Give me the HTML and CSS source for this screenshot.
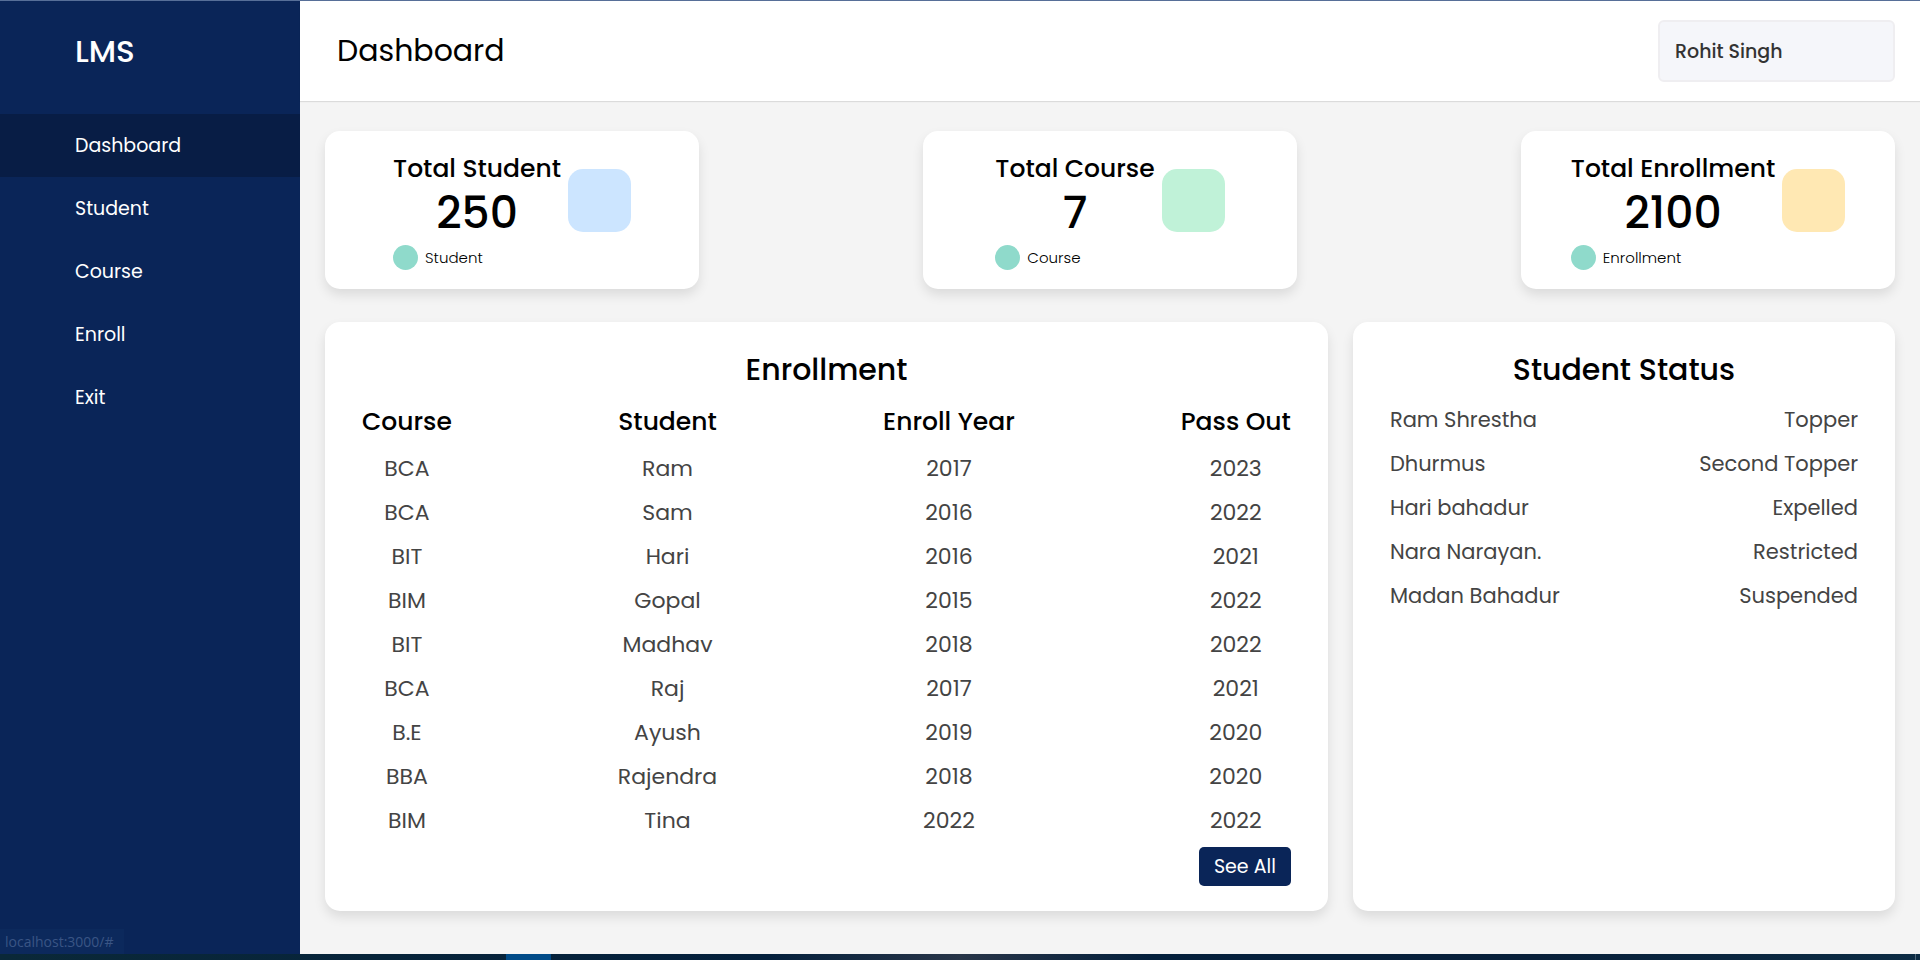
FILE: index.html
```html
<!DOCTYPE html>
<html lang="en">
<head>
<meta charset="utf-8">
<meta name="viewport" content="width=device-width, initial-scale=1">
<title>LMS Dashboard</title>
<link rel="stylesheet" href="styles.css">
</head>
<body>
<div class="shell">
  <aside class="sidebar">
    <div class="brand">LMS</div>
    <nav class="menu">
      <a class="menu-link active" href="#">Dashboard</a>
      <a class="menu-link" href="#">Student</a>
      <a class="menu-link" href="#">Course</a>
      <a class="menu-link" href="#">Enroll</a>
      <a class="menu-link" href="#">Exit</a>
    </nav>
    <div class="link-status">localhost:3000/#</div>
  </aside>
  <main class="main">
    <header class="topbar">
      <h1 class="page-title">Dashboard</h1>
      <button class="profile" type="button">Rohit Singh</button>
    </header>
    <div class="content">
      <section class="cards">
        <article class="card">
          <div class="card-text">
            <h2 class="card-title">Total Student</h2>
            <div class="card-number">250</div>
            <div class="card-note"><span class="dot"></span>Student</div>
          </div>
          <span class="tile tile-blue"></span>
        </article>
        <article class="card">
          <div class="card-text">
            <h2 class="card-title">Total Course</h2>
            <div class="card-number">7</div>
            <div class="card-note"><span class="dot"></span>Course</div>
          </div>
          <span class="tile tile-green"></span>
        </article>
        <article class="card">
          <div class="card-text">
            <h2 class="card-title">Total Enrollment</h2>
            <div class="card-number">2100</div>
            <div class="card-note"><span class="dot"></span>Enrollment</div>
          </div>
          <span class="tile tile-yellow"></span>
        </article>
      </section>
      <div class="panels">
        <section class="panel">
          <h2 class="panel-title">Enrollment</h2>
          <table class="enrollments">
            <thead>
              <tr><th>Course</th><th>Student</th><th>Enroll Year</th><th>Pass Out</th></tr>
            </thead>
            <tbody>
              <tr><td>BCA</td><td>Ram</td><td>2017</td><td>2023</td></tr>
              <tr><td>BCA</td><td>Sam</td><td>2016</td><td>2022</td></tr>
              <tr><td>BIT</td><td>Hari</td><td>2016</td><td>2021</td></tr>
              <tr><td>BIM</td><td>Gopal</td><td>2015</td><td>2022</td></tr>
              <tr><td>BIT</td><td>Madhav</td><td>2018</td><td>2022</td></tr>
              <tr><td>BCA</td><td>Raj</td><td>2017</td><td>2021</td></tr>
              <tr><td>B.E</td><td>Ayush</td><td>2019</td><td>2020</td></tr>
              <tr><td>BBA</td><td>Rajendra</td><td>2018</td><td>2020</td></tr>
              <tr><td>BIM</td><td>Tina</td><td>2022</td><td>2022</td></tr>
            </tbody>
          </table>
          <a class="see-all" href="#">See All</a>
        </section>
        <section class="panel">
          <h2 class="panel-title">Student Status</h2>
          <table class="statuses">
            <tbody>
              <tr><td>Ram Shrestha</td><td>Topper</td></tr>
              <tr><td>Dhurmus</td><td>Second Topper</td></tr>
              <tr><td>Hari bahadur</td><td>Expelled</td></tr>
              <tr><td>Nara Narayan.</td><td>Restricted</td></tr>
              <tr><td>Madan Bahadur</td><td>Suspended</td></tr>
            </tbody>
          </table>
        </section>
      </div>
    </div>
  </main>
</div>
<footer class="taskbar"><span class="taskbar-active"></span><span class="taskbar-edge"></span></footer>
</body>
</html>
```

FILE: styles.css
```css
* { box-sizing: border-box; margin: 0; padding: 0; }

body {
  display: flex;
  flex-direction: column;
  min-height: 100vh;
  border-top: 1px solid #576f98;
  background: #f4f4f4;
  color: #000;
  font-family: Poppins, Inter, "Open Sans", sans-serif;
  font-size: 21px;
}

.shell { display: flex; flex: 1; }

.sidebar {
  display: flex;
  flex-direction: column;
  flex: 0 0 300px;
  background: #0a2558;
  color: #fff;
}
.brand { padding: 0 75px; font-size: 31px; font-weight: 500; line-height: 100px; margin-bottom: 13px; }
.menu { display: flex; flex-direction: column; }
.menu-link {
  padding: 0 75px;
  color: #fff;
  font-size: 19px;
  line-height: 63px;
  text-decoration: none;
}
.menu-link.active { background: #081d45; }
.link-status {
  align-self: flex-start;
  margin-top: auto;
  padding: 0 10px 0 5px;
  background: #0c295c;
  color: #3a5585;
  font-family: "Open Sans", sans-serif;
  font-size: 14px;
  line-height: 25px;
}

.main { flex: 1; min-width: 0; }
.topbar {
  display: flex;
  align-items: center;
  justify-content: space-between;
  min-height: 100px;
  padding: 0 25px 0 37px;
  background: #fff;
  box-shadow: 0 1px 1px rgba(0, 0, 0, 0.1);
}
.page-title { font-size: 30px; font-weight: 400; }
.profile {
  width: 237px;
  height: 62px;
  padding: 0 15px;
  border: 2px solid #efeef1;
  border-radius: 6px;
  background: #f5f6fa;
  color: #333;
  font-family: inherit;
  font-size: 19px;
  font-weight: 500;
  text-align: left;
}

.content { padding: 30px 25px 43px; }
.cards { display: flex; justify-content: space-between; gap: 25px; margin-bottom: 33px; }
.card {
  display: flex;
  flex: 0 1 374px;
  justify-content: center;
  gap: 7px;
  padding: 19px 0;
}
.card, .panel {
  border-radius: 15px;
  background: #fff;
  box-shadow: 0 6px 12px rgba(0, 0, 0, 0.1);
}
.card-title { font-size: 25px; font-weight: 500; line-height: 38px; white-space: nowrap; }
.card-number { font-size: 44px; font-weight: 500; line-height: 50px; text-align: center; margin-bottom: 7px; }
.card-note { display: flex; align-items: center; gap: 7px; font-size: 15px; font-weight: 300; line-height: 25px; }
.dot { width: 25px; height: 25px; border-radius: 50%; background: #8fdacb; }
.tile { width: 63px; height: 63px; margin-top: 19px; border-radius: 15px; }
.tile-blue { background: #cce5ff; }
.tile-green { background: #c0f2d8; }
.tile-yellow { background: #ffe8b3; }

.panels { display: grid; grid-template-columns: 37fr 20fr; gap: 25px; }
.panel { display: flex; flex-direction: column; padding: 26px 37px 25px; }
.panel-title { margin-bottom: 5px; font-size: 30px; font-weight: 500; line-height: 44px; text-align: center; }

.enrollments { display: grid; grid-template-columns: repeat(4, auto); justify-content: space-between; text-align: center; }
.enrollments thead, .enrollments tbody, .enrollments tr { display: contents; }
.enrollments th { font-size: 25px; font-weight: 500; line-height: 50px; }
.enrollments td, .statuses td { color: #444; font-weight: 400; font-size: 22px; line-height: 44px; }
.statuses { width: 100%; margin-top: 1px; border-collapse: collapse; }
.statuses td { font-size: 21px; }
.statuses td:last-child { text-align: right; }

.see-all {
  align-self: flex-end;
  margin-top: 4px;
  padding: 0 15px;
  border-radius: 5px;
  background: #0a2558;
  color: #fff;
  font-size: 19px;
  line-height: 39px;
  text-decoration: none;
}

.taskbar {
  display: flex;
  justify-content: space-between;
  height: 6px;
  padding: 0 4px 0 506px;
  background: linear-gradient(90deg, #0a2838, #04203c 40%, #283548 50%, #04203c 60%, #08203a 80%, #0c2c44);
}
.taskbar-active { width: 45px; background: #004a87; }
.taskbar-edge { width: 1px; background: #50677a; }
```
